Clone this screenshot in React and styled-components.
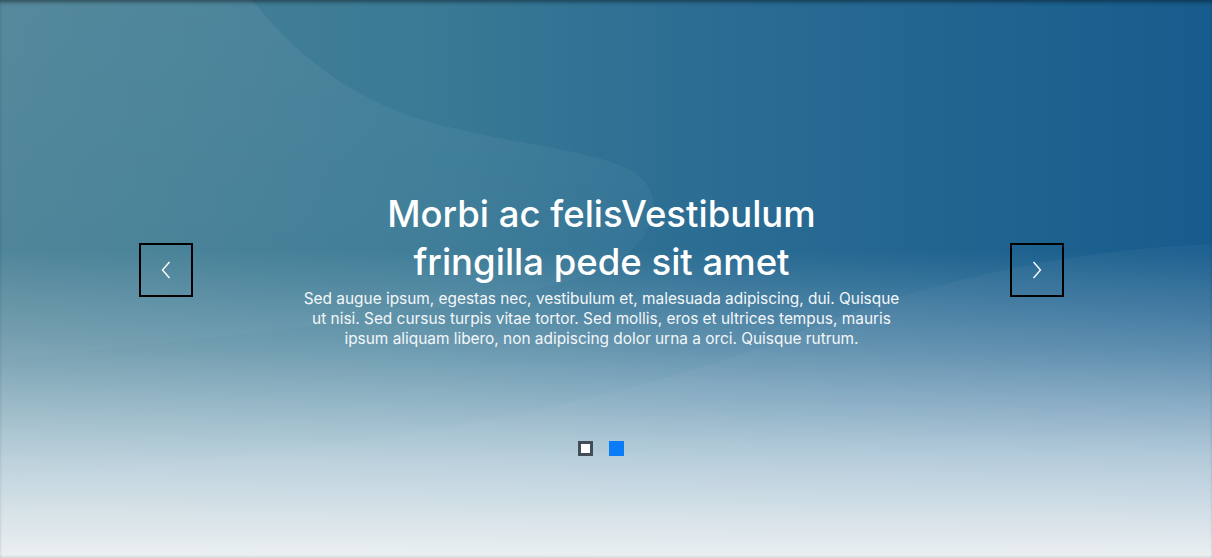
import React, { useState } from "react";
import styled, { createGlobalStyle } from "styled-components";

const GlobalStyle = createGlobalStyle`
  html, body {
    margin: 0;
    padding: 0;
    background: #ffffff;
  }
  body {
    font-family: Inter, "Noto Sans", sans-serif;
  }
`;

const Slider = styled.section`
  position: relative;
  height: 558px;
  box-sizing: border-box;
  padding-bottom: 18px;
  overflow: hidden;
  display: flex;
  align-items: center;
  background:
    linear-gradient(
      180deg,
      rgba(255, 255, 255, 0) 0%,
      rgba(255, 255, 255, 0) 45%,
      rgba(200, 216, 226, 0.35) 62%,
      rgba(215, 228, 236, 0.8) 82%,
      rgba(236, 240, 242, 1) 100%
    ),
    linear-gradient(90deg, #4b8296 0%, #3a7a95 35%, #2a6c93 60%, #175c8d 100%);
`;

const Backdrop = styled.svg`
  position: absolute;
  inset: 0;
  width: 100%;
  height: 100%;
  pointer-events: none;
`;

const Shade = styled.div`
  position: absolute;
  inset: 0;
  pointer-events: none;
  box-shadow: inset 0 4px 4px -2px rgba(0, 0, 0, 0.45),
    inset 0 -3px 3px -2px rgba(0, 0, 0, 0.12);
`;

const Stage = styled.div`
  position: relative;
  width: 100%;
  box-sizing: border-box;
  padding: 0 148px 0 139px;
  display: grid;
  grid-template-columns: 54px 1fr 54px;
  align-items: center;
`;

const NavButton = styled.button`
  width: 54px;
  height: 54px;
  box-sizing: border-box;
  border: 2px solid #000000;
  background: transparent;
  padding: 0;
  display: flex;
  align-items: center;
  justify-content: center;
  cursor: pointer;
`;

const Caption = styled.div`
  justify-self: center;
  width: 596px;
  text-align: center;
  color: #ffffff;
  margin-top: -2px;
`;

const Title = styled.h2`
  margin: 0;
  font-size: 36.5px;
  line-height: 48px;
  font-weight: 500;
  letter-spacing: 0;
`;

const Text = styled.p`
  margin: 3px 0 0;
  font-size: 15.4px;
  line-height: 20px;
  font-weight: 400;
  color: #f4f7f9;
`;

const Indicators = styled.div`
  position: absolute;
  left: 0;
  right: 0;
  top: 441px;
  display: flex;
  justify-content: center;
  gap: 16px;
  padding-right: 10px;
`;

const Dot = styled.button`
  width: 15px;
  height: 15px;
  box-sizing: border-box;
  padding: 0;
  cursor: pointer;
  border: ${(p) => (p.$active ? "none" : "3px solid #434d58")};
  background: ${(p) => (p.$active ? "#0a7cf7" : "#ffffff")};
`;

const Chevron = ({ dir }) => (
  <svg width="12" height="20" viewBox="0 0 12 20" fill="none">
    <path
      d={dir === "left" ? "M9.5 2 L2.5 10 L9.5 18" : "M2.5 2 L9.5 10 L2.5 18"}
      stroke="#ffffff"
      strokeWidth="1.4"
    />
  </svg>
);

const App = () => {
  const [active, setActive] = useState(1);
  return (
    <>
      <GlobalStyle />
      <Slider>
        <Backdrop viewBox="0 0 1212 558" preserveAspectRatio="none">
          <defs>
            <linearGradient id="fade" x1="0" y1="0" x2="0" y2="1">
              <stop offset="0" stopColor="#ffffff" stopOpacity="0.06" />
              <stop offset="1" stopColor="#ffffff" stopOpacity="0.02" />
            </linearGradient>
          </defs>
          <path
            d="M0 0 L252 0 C300 60 360 105 440 125 C520 145 590 150 630 170 C665 190 660 230 620 260 C560 300 300 330 0 360 Z"
            fill="url(#fade)"
          />
          <path
            d="M1212 244 C1050 250 900 290 780 340 C620 400 400 450 0 475 L0 558 L1212 558 Z"
            fill="#ffffff"
            fillOpacity="0.035"
          />
        </Backdrop>
        <Stage>
          <NavButton aria-label="Previous" onClick={() => setActive(0)}>
            <Chevron dir="left" />
          </NavButton>
          <Caption>
            <Title>
              Morbi ac felisVestibulum
              <br />
              fringilla pede sit amet
            </Title>
            <Text>
              Sed augue ipsum, egestas nec, vestibulum et, malesuada adipiscing,
              dui. Quisque ut nisi. Sed cursus turpis vitae tortor. Sed mollis,
              eros et ultrices tempus, mauris ipsum aliquam libero, non
              adipiscing dolor urna a orci. Quisque rutrum.
            </Text>
          </Caption>
          <NavButton aria-label="Next" onClick={() => setActive(1)}>
            <Chevron dir="right" />
          </NavButton>
        </Stage>
        <Indicators>
          {[0, 1].map((i) => (
            <Dot key={i} $active={i === active} onClick={() => setActive(i)} />
          ))}
        </Indicators>
        <Shade />
      </Slider>
    </>
  );
};

export default App;
